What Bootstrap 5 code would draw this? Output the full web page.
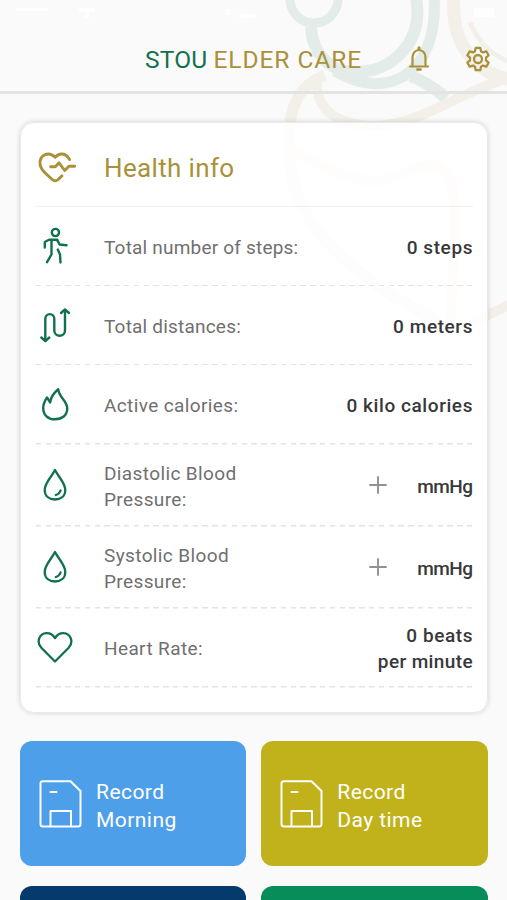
<!DOCTYPE html>
<html lang="en">
<head>
<meta charset="utf-8">
<meta name="viewport" content="width=device-width, initial-scale=1">
<title>STOU Elder Care</title>
<link rel="stylesheet" href="https://cdn.jsdelivr.net/npm/bootstrap@5.3.0/dist/css/bootstrap.min.css">
<style>
  body { background: #fafafa; font-family: Roboto, "Liberation Sans", sans-serif; height: 900px; overflow: hidden; color: #6f6f6f; }
  .watermark { position: absolute; left: 0; top: 0; z-index: 0; pointer-events: none; }
  .app-bar { height: 94px; border-bottom: 3px solid #e3e3e3; padding: 28px 16px 0 145px; position: relative; }
  .brand { font-size: 24.5px; line-height: 62px; letter-spacing: .15px; white-space: nowrap; }
  .brand .gold { letter-spacing: .95px; }
  .app-bar .icons { margin-top: -2px; }
  .bell { margin-right: 35px; }
  .green { color: #12714d; }
  .gold { color: #aa9139; }
  .info-card { margin: 28px 19px 0 20px; height: 591px; padding: 0 14.5px 0 15px; border: 1px solid #e9e9e9; border-radius: 14px; background: rgba(255,255,255,.87); box-shadow: 0 0 5px rgba(0,0,0,.17); }
  .info-head { height: 84px; border-bottom: 1px solid #f0f0f0; padding-top: 6px; }
  .info-head h1 { font-size: 26px; letter-spacing: .35px; font-weight: 400; padding-top: 3px; }
  .icon-slot { width: 67px; flex: none; margin-left: 1px; }
  .metric { height: 79.2px; padding-top: 2px; font-size: 19px; line-height: 26px; background: repeating-linear-gradient(90deg, #e3e3e3 0 5.5px, transparent 5.5px 9.8px) bottom / 100% 1.5px no-repeat; }
  .metric .icon-slot svg { margin: -2px 0 0 0; display: block; }
  .metric.tall { height: 82px; }
  .metric-name { letter-spacing: .38px; }
  .metric-name.snug { letter-spacing: .2px; }
  .metric-value { color: #38383a; font-weight: 500; letter-spacing: .58px; margin-right: -.5px; text-align: right; }
  .metric-value.unit { letter-spacing: -.5px; margin-right: 0; }
  .metric-value .snug { letter-spacing: .38px; }
  .plus { margin-right: 30px; margin-top: -3px; }
  .clip { height: 187px; overflow: hidden; }
  .tiles { padding: 28px 19.5px 0 20px; display: grid; grid-template-columns: 1fr 1fr; gap: 20px 15px; }
  .tile { height: 125px; border-radius: 12px; padding: 4px 0 0 19px; color: #fff; font-size: 21px; line-height: 28px; letter-spacing: .45px; }
  .tile.sliver { height: 14px; border-radius: 12px 12px 0 0; }
  .tile svg { margin-right: 14px; margin-top: -4px; flex: none; }
  .blue { background: #4e9fe9; } .olive { background: #c1b21b; } .navy { background: #043a6c; } .emerald { background: #078d5a; }
  .line { fill: none; stroke: currentColor; stroke-linecap: round; stroke-linejoin: round; }
</style>
<script src="https://cdn.jsdelivr.net/npm/bootstrap@5.3.0/dist/js/bootstrap.bundle.min.js"></script>
</head>
<body>
<svg class="watermark" width="507" height="420" fill="none" aria-hidden="true">
  <g stroke="#e3ece8">
    <circle cx="314" cy="-1" r="24" stroke-width="9"/>
    <path d="M311 27C312 47 322 61 337 69C365 76 388 69 404 50C418 33 419 16 416-4" stroke-width="12"/>
    <path d="M335 71C362 87 385 87 404 76C424 63 437 37 434-4" stroke-width="11"/>
    <path d="M411 76Q430 84 446 98" stroke-width="12"/>
    <path d="M290 142C285 210 330 265 439 322" stroke-width="12"/>
  </g>
  <g stroke="#f2f0e9">
    <path d="M454-4C450 45 477 75 514 80" stroke-width="13"/>
    <path d="M470 22Q480 49 507 61" stroke-width="5"/>
    <path d="M325 75C301 84 288 106 289 142" stroke-width="11"/>
    <path d="M317 82C317 111 337 125 375 126C424 124 450 95 514 76" stroke-width="10"/>
    <path d="M289 149C317 163 346 180 375 181C400 179 419 161 441 166C460 180 456 230 450 325" stroke-width="10"/>
    <path d="M465 327Q488 314 514 303" stroke-width="10"/>
  </g>
  <g fill="#fff" opacity=".8">
    <path d="M16 8h32v3H16zM79 8h16v4H90l-1 6h-5l1-6h-6zM474 8h20v9h-20zM239 14h16v4h-16z"/>
    <circle cx="228" cy="12" r="3.5"/>
  </g>
</svg>

<header class="app-bar d-flex align-items-center justify-content-between">
  <div class="brand"><span class="green">STOU</span> <span class="gold">ELDER CARE</span></div>
  <div class="icons d-flex align-items-center gold">
    <svg width="22" height="26" viewBox="0 0 22 26" class="line bell" stroke-width="2.2"><path d="M2 20.5H20M4.5 20V11.5C4.5 7.2 7.2 4 11 4S17.5 7.2 17.5 11.5V20"/><path d="M11 1.7V3.5" stroke-width="3"/><path d="M9.5 23.5H12.5" stroke-width="2.6"/></svg>
    <svg width="26" height="26" viewBox="0 0 26 26" class="line" stroke-width="2.3"><circle cx="13" cy="13" r="4"/><path d="M10.7 1.8h4.6l.7 3.4 2 1.2 3.3-1.1 2.3 4-2.6 2.3v2.8l2.6 2.3-2.3 4-3.3-1.1-2 1.2-.7 3.4h-4.6l-.7-3.4-2-1.2-3.3 1.1-2.3-4 2.6-2.3v-2.8L2.4 9.3l2.3-4L8 6.4l2-1.2z"/></svg>
  </div>
</header>

<main class="position-relative">
  <section class="info-card">
    <div class="info-head d-flex align-items-center gold">
      <div class="icon-slot"><svg width="40" height="32" viewBox="-.7 .5 40 32" class="line" stroke-width="2.9"><path d="M31.8 8C28 1.2 21.5 1 17.5 5.8C11-.5 2.5 3 2.3 11.5C2.2 15.5 4 18 7 21L14.5 28C16.5 29.8 18.5 29.8 20.5 28L24.2 24.4"/><path d="M13 15.2H17.6L21.3 11.3L27 19L31.2 14.7H37"/></svg></div>
      <h1 class="mb-0">Health info</h1>
    </div>

    <div class="metric d-flex align-items-center">
      <div class="icon-slot green"><svg width="36" height="40" viewBox="0 0 36 40" class="line" stroke-width="2.4"><circle cx="18.4" cy="5.5" r="3.6"/><path d="M7.8 20.5V15L12 12.7H20.2L22.5 17.5L29.5 18.3M14.5 13V27.5L10 35.2M20.5 13V14M20.8 22.5L23 27.5L23.5 35.5"/></svg></div>
      <div class="metric-name snug flex-grow-1">Total number of steps:</div>
      <div class="metric-value">0 steps</div>
    </div>

    <div class="metric d-flex align-items-center">
      <div class="icon-slot green"><svg width="36" height="40" viewBox="0 0 36 40" class="line" stroke-width="2.4"><path d="M8.3 34.5V12.8C8.3 6.5 17.3 6.5 17.3 12.8V24.5C17.3 31.5 28 31.5 28 24.5V4.5"/><path d="M24 7L28 3.5L32 7M4.3 31.5L8.3 35L12.3 31.5"/></svg></div>
      <div class="metric-name snug flex-grow-1">Total distances:</div>
      <div class="metric-value">0 meters</div>
    </div>

    <div class="metric d-flex align-items-center">
      <div class="icon-slot green"><svg width="36" height="40" viewBox="0 -1 36 40" class="line" stroke-width="2.4"><path d="M21.2 3.2C22 12 30.2 14.5 30.2 22.5C30.2 29.5 25 33.3 18 33.3S6.2 29 6.2 22C6.2 18 7.7 15 10 11.4L13.1 16.4C14 10.7 17.2 6.5 21.2 3.2Z"/></svg></div>
      <div class="metric-name flex-grow-1">Active calories:</div>
      <div class="metric-value">0 kilo calories</div>
    </div>

    <div class="metric tall d-flex align-items-center">
      <div class="icon-slot green"><svg width="36" height="40" viewBox="0 0 36 40" class="line" stroke-width="2.3"><path d="M18 4C14.5 11 7.7 17 7.7 24C7.7 30 12 33.5 18 33.5S28.3 30 28.3 24C28.3 17 21.5 11 18 4Z"/><path d="M18.8 29Q22.5 28 23.6 24.5"/></svg></div>
      <div class="metric-name flex-grow-1">Diastolic Blood<br>Pressure:</div>
      <svg class="plus" width="18" height="18" viewBox="0 0 18 18" stroke="#919191" stroke-width="1.9"><path d="M.3 9H17.7M9 .3V17.7"/></svg>
      <div class="metric-value unit">mmHg</div>
    </div>

    <div class="metric tall d-flex align-items-center">
      <div class="icon-slot green"><svg width="36" height="40" viewBox="0 0 36 40" class="line" stroke-width="2.3"><path d="M18 4C14.5 11 7.7 17 7.7 24C7.7 30 12 33.5 18 33.5S28.3 30 28.3 24C28.3 17 21.5 11 18 4Z"/><path d="M18.8 29Q22.5 28 23.6 24.5"/></svg></div>
      <div class="metric-name flex-grow-1">Systolic Blood<br>Pressure:</div>
      <svg class="plus" width="18" height="18" viewBox="0 0 18 18" stroke="#919191" stroke-width="1.9"><path d="M.3 9H17.7M9 .3V17.7"/></svg>
      <div class="metric-value unit">mmHg</div>
    </div>

    <div class="metric d-flex align-items-center">
      <div class="icon-slot green"><svg width="36" height="40" viewBox="0 0 36 40" class="line" stroke-width="2.3"><path d="M18 33.5L4.3 19.8C-1 14 2.3 5.4 9.5 5.1C13.4 5 16 7 18 10C20 7 22.6 5 26.5 5.1C33.7 5.4 37 14 31.7 19.8Z"/></svg></div>
      <div class="metric-name flex-grow-1">Heart Rate:</div>
      <div class="metric-value">0 beats<br><span class="snug">per minute</span></div>
    </div>
  </section>

  <section class="clip">
    <div class="tiles">
      <div class="tile blue d-flex align-items-center">
        <svg width="43" height="48" viewBox="0 0 43 48" class="line" stroke-width="2"><path d="M3.5 1.2H31.5L41.5 11V44Q41.5 46.5 39 46.5H4Q1.5 46.5 1.5 44V3.5Q1.5 1.2 4 1.2M11.5 46V31H32V46M11.5 12H17.5"/></svg>
        <div>Record<br>Morning</div>
      </div>
      <div class="tile olive d-flex align-items-center">
        <svg width="43" height="48" viewBox="0 0 43 48" class="line" stroke-width="2"><path d="M3.5 1.2H31.5L41.5 11V44Q41.5 46.5 39 46.5H4Q1.5 46.5 1.5 44V3.5Q1.5 1.2 4 1.2M11.5 46V31H32V46M11.5 12H17.5"/></svg>
        <div>Record<br>Day time</div>
      </div>
      <div class="tile sliver navy"></div>
      <div class="tile sliver emerald"></div>
    </div>
  </section>
</main>
</body>
</html>
